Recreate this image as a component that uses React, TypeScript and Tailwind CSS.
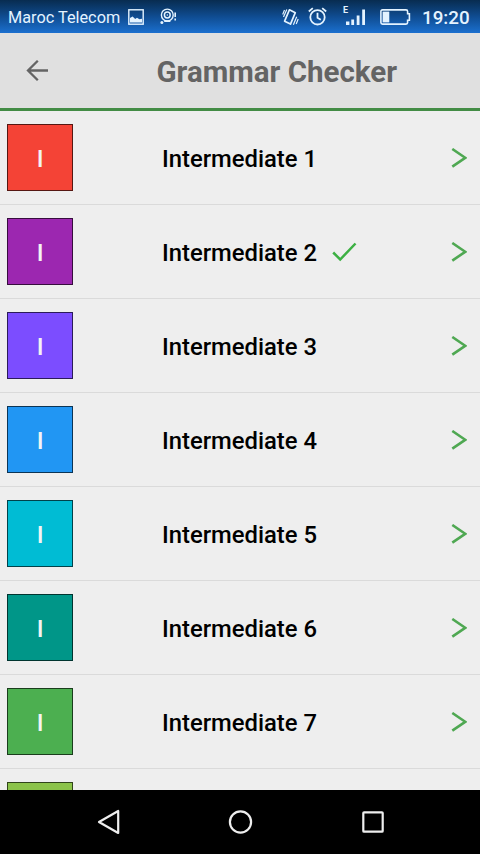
import React from "react";

const rows = [
  { color: "bg-[#f44336]", label: "Intermediate 1" },
  { color: "bg-[#9c27b0]", label: "Intermediate 2", done: true },
  { color: "bg-[#7c4dff]", label: "Intermediate 3" },
  { color: "bg-[#2196f3]", label: "Intermediate 4" },
  { color: "bg-[#00bcd4]", label: "Intermediate 5" },
  { color: "bg-[#009688]", label: "Intermediate 6" },
  { color: "bg-[#4caf50]", label: "Intermediate 7" },
];

function StatusBar() {
  return (
    <div className="flex h-[33px] shrink-0 items-center bg-linear-to-b from-[#082c50] via-[#0f4c91] to-[#1b70cf] pl-2 pr-[11px] text-[#e4f3ff]">
      <span className="w-[112px] whitespace-nowrap pt-[2px] text-[16.3px] leading-[31px]">Maroc Telecom</span>
      <svg className="ml-2 shrink-0" width="16" height="16" viewBox="0 0 16 16" fill="none">
        <rect x="0.8" y="0.8" width="14.4" height="14.4" stroke="currentColor" strokeWidth="1.4" />
        <path d="M2 13.5V9l2.6-1.4 2.6 2.4 1.8-1.2 2.4 1.4 2.6-.4v3.7z" fill="currentColor" />
      </svg>
      <svg className="ml-4 shrink-0" width="17" height="17" viewBox="0 0 17 17" fill="none" stroke="currentColor">
        <circle cx="7.3" cy="7" r="5.9" strokeWidth="1.4" />
        <circle cx="7.3" cy="7" r="2.9" strokeWidth="1.5" />
        <circle cx="7.3" cy="7" r="0.7" fill="currentColor" stroke="none" />
        <circle cx="1.9" cy="14.5" r="1.5" fill="currentColor" stroke="none" />
        <path d="M4.2 13.1h6.2M15.2 4.5v4.6M15.2 10.5v2" strokeWidth="1.6" />
      </svg>
      <svg className="ml-auto shrink-0" width="17" height="18" viewBox="0 0 17 18" fill="none" stroke="currentColor">
        <path d="M7.4 1.8l5.9 2.9-4.8 11.4-5.9-2.9z" strokeWidth="1.7" strokeLinejoin="round" />
        <path d="M4.8 1.5L1.5 9M2.5 2L.7 6.5M14.7 8.8l-3.3 8M16.2 11l-2 5" strokeWidth="1.2" />
      </svg>
      <svg className="ml-[9px] shrink-0" width="19" height="19" viewBox="0 0 19 19" fill="none" stroke="currentColor" strokeWidth="1.8">
        <circle cx="9.5" cy="10.3" r="7.2" />
        <path d="M9.5 5.7v5l3.3 2M.8 4.5l4-3.4M18.2 4.5l-4-3.4" />
      </svg>
      <div className="ml-4 mb-[2px] flex h-[21px] w-[24px] shrink-0 items-end">
        <span className="-mr-[3px] w-[6px] shrink-0 self-start text-[9px] font-bold leading-[11px]">E</span>
        <svg className="shrink-0" width="20" height="17" viewBox="0 0 20 17" fill="currentColor">
          <path d="M0 12.5h3.4V16H0zM5.3 10.5h2.8V16H5.3zM10.7 6.5h2.8V16h-2.8zM16.2.5H19V16h-2.8z" />
        </svg>
      </div>
      <svg className="ml-[13px] shrink-0" width="31" height="16" viewBox="0 0 31 16" fill="none">
        <path d="M2.5.9H26c1 0 1.6.6 1.6 1.6v2.3h1.8v6.4h-1.8v2.3c0 1-.6 1.6-1.6 1.6H2.5C1.5 15.1.9 14.5.9 13.5v-11C.9 1.5 1.5.9 2.5.9z" stroke="currentColor" strokeWidth="1.6" />
        <path d="M2.6 2.6h6.7v10.8H2.6z" fill="currentColor" />
      </svg>
      <span className="ml-[11px] w-[47px] whitespace-nowrap pt-[3px] text-[18.8px] font-medium leading-[30px]">19:20</span>
    </div>
  );
}

export default function App() {
  return (
    <div className="flex h-[854px] w-[480px] flex-col overflow-hidden bg-[#eeeeee] font-[Roboto,sans-serif]">
      <StatusBar />
      <header className="flex h-[78px] shrink-0 items-center border-b-[3px] border-[#438c45] bg-[#e0e0e0] pl-[26px] text-[#646464]">
        <svg className="shrink-0" width="23" height="22" viewBox="0 0 23 22" fill="none" stroke="currentColor" strokeWidth="2.3">
          <path d="M22 10.5H2M11.8.8L2 10.5l9.8 9.8" />
        </svg>
        <h1 className="ml-[107.5px] whitespace-nowrap pt-[3px] text-[29.5px] font-bold leading-[72px]">Grammar Checker</h1>
      </header>
      <main className="min-h-0 flex-1 overflow-hidden">
        {rows.map((row) => (
          <div key={row.label} className="flex h-[94px] items-center border-b border-[#dadada] pl-[6.5px] pr-[13px]">
            <div className={`flex size-[66.5px] shrink-0 items-center justify-center border border-black/65 pl-px pt-[2px] text-[24px] font-medium text-[#f4f4f4] ${row.color}`}>
              I
            </div>
            <span className="ml-[89px] whitespace-nowrap pt-[2px] text-[23.8px] font-medium leading-8 text-black">{row.label}</span>
            {row.done && (
              <svg className="ml-[15px] shrink-0" width="25" height="20" viewBox="0 0 25 20" fill="none" stroke="#3cb043" strokeWidth="2.5">
                <path d="M1.2 10.5l7 7L23.5 1.5" />
              </svg>
            )}
            <svg className="ml-auto shrink-0" width="16" height="20" viewBox="0 0 16 20" fill="none" stroke="#4fa852" strokeWidth="2.6">
              <path d="M1.3 1L14.2 9.8 1.3 18.6" />
            </svg>
          </div>
        ))}
        <div className="pl-[6.5px] pt-[13px]">
          <div className="size-[66.5px] border border-black/65 bg-[#8bc34a]" />
        </div>
      </main>
      <nav className="flex h-16 shrink-0 items-center bg-black pl-[97px] text-[#eeeeee]">
        <svg width="24" height="26" viewBox="0 0 24 26" fill="none" stroke="currentColor" strokeWidth="2.2" strokeLinejoin="round">
          <path d="M21.2 2v22L2 13z" />
        </svg>
        <svg className="ml-[107px]" width="26" height="26" viewBox="0 0 26 26" fill="none" stroke="currentColor" strokeWidth="2.2">
          <circle cx="12.5" cy="13" r="10.6" />
        </svg>
        <svg className="ml-[107px]" width="24" height="24" viewBox="0 0 24 24" fill="none" stroke="currentColor" strokeWidth="2.2">
          <rect x="2.3" y="2.3" width="19.4" height="19.4" rx="0.8" />
        </svg>
      </nav>
    </div>
  );
}
